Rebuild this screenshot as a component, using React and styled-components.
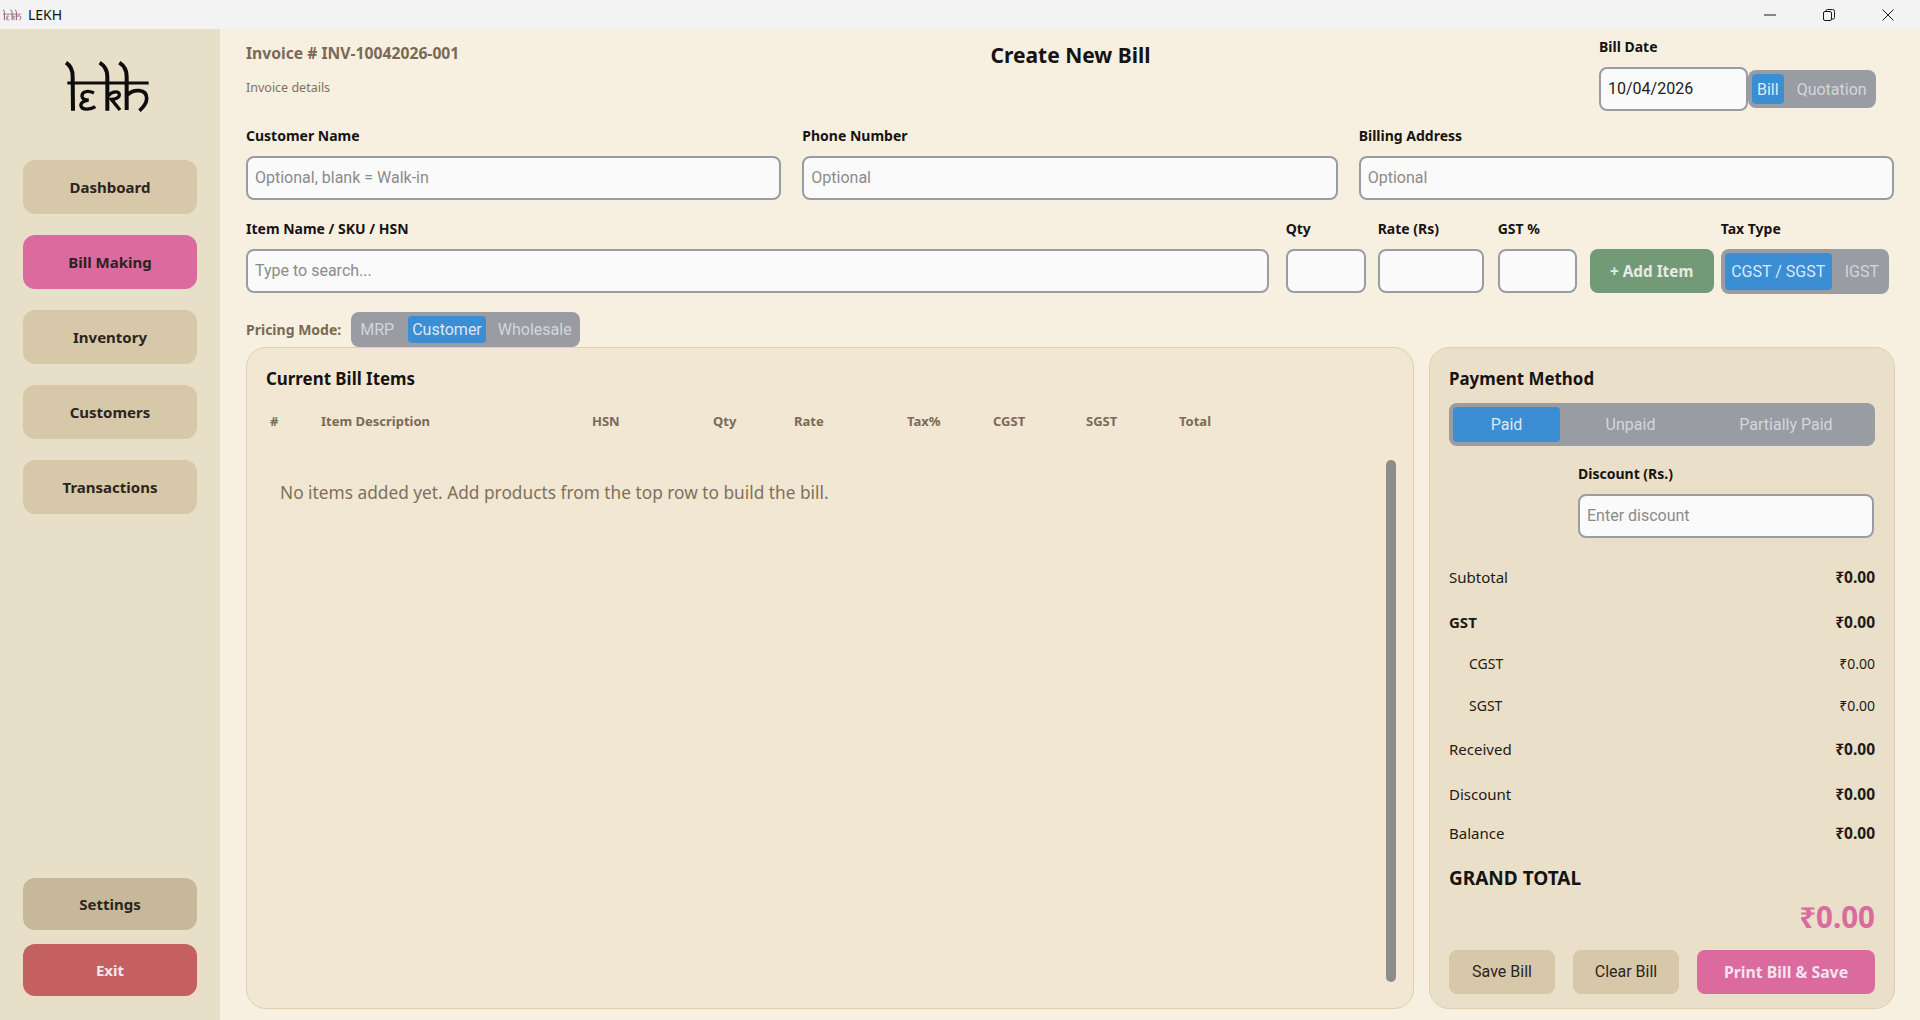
import React from 'react';
import styled, { createGlobalStyle } from 'styled-components';

const UI_FONT = `"Noto Sans", "Open Sans", "Liberation Sans", sans-serif`;
const INPUT_FONT = `Roboto, "Noto Sans", sans-serif`;

const GlobalStyle = createGlobalStyle`
  html, body, #root {
    margin: 0;
    padding: 0;
    height: 100%;
  }
  body {
    font-family: ${UI_FONT};
    background: #f7f0e1;
    overflow: hidden;
  }
  * {
    box-sizing: border-box;
  }
`;

// bill table columns, first cell sits on the # column
const TABLE_COLUMNS = '51px 271px 121px 81px 113px 86px 93px 93px 1fr';

const NAV_ITEMS = ['Dashboard', 'Bill Making', 'Inventory', 'Customers', 'Transactions'];
const TABLE_HEADERS = ['#', 'Item Description', 'HSN', 'Qty', 'Rate', 'Tax%', 'CGST', 'SGST', 'Total'];

const Logo = ({ width, height, color }) => (
  <svg width={width} height={height} viewBox="0 0 270 162" fill="none" stroke={color} aria-label="lekh">
    <path d="M16 69H260" strokeWidth="9" />
    <path d="M12 8C28 18 32 32 32 50L33 152" strokeWidth="12" />
    <path d="M96 99C76 90 60 95 60 108C60 118 70 120 80 120C63 122 55 130 57 138C60 150 85 150 100 140" strokeWidth="10" />
    <path d="M113 8C129 18 136 32 136 50L136 152" strokeWidth="12" />
    <path d="M138 108C150 92 172 92 172 104C172 114 158 118 148 118L174 150" strokeWidth="10" />
    <path d="M172 8C188 18 194 32 194 50L194 150" strokeWidth="12" />
    <path d="M196 105C214 86 254 86 254 115C254 135 240 145 232 152" strokeWidth="11" />
  </svg>
);

const App = () => (
  <Window>
    <GlobalStyle />
    <TitleBar>
      <TitleLeft>
        <Logo width={20} height={12} color="#8a4a66" />
        <span>LEKH</span>
      </TitleLeft>
      <WindowControls>
        <svg width="12" height="12" viewBox="0 0 12 12" stroke="#1a1a1a" fill="none">
          <path d="M0 6H12" />
        </svg>
        <svg width="12" height="12" viewBox="0 0 12 12" stroke="#1a1a1a" fill="none">
          <rect x="0.5" y="2.5" width="8" height="9" rx="1.5" />
          <path d="M3 2.5V2a1.5 1.5 0 0 1 1.5-1.5h5A2 2 0 0 1 11.5 2.5v6A1.5 1.5 0 0 1 10 10h-1.5" />
        </svg>
        <svg width="12" height="12" viewBox="0 0 12 12" stroke="#1a1a1a" fill="none">
          <path d="M0.5 0.5L11.5 11.5M11.5 0.5L0.5 11.5" />
        </svg>
      </WindowControls>
    </TitleBar>

    <Body>
      <Sidebar>
        <LogoWrap>
          <Logo width={90} height={54} color="#0d0d0d" />
        </LogoWrap>
        <NavList>
          {NAV_ITEMS.map((item) => (
            <NavButton key={item} $active={item === 'Bill Making'}>{item}</NavButton>
          ))}
        </NavList>
        <SidebarBottom>
          <FooterButton $bg="#c8b89a" $color="#2b241f">Settings</FooterButton>
          <FooterButton $bg="#c46060" $color="#f2e6f2">Exit</FooterButton>
        </SidebarBottom>
      </Sidebar>

      <Main>
        <Header>
          <InvoiceInfo>
            <InvoiceNumber>Invoice # INV-10042026-001</InvoiceNumber>
            <InvoiceSub>Invoice details</InvoiceSub>
          </InvoiceInfo>
          <PageTitle>Create New Bill</PageTitle>
          <DateBlock>
            <Label>Bill Date</Label>
            <DateRow>
              <Input $width="149px" defaultValue="10/04/2026" />
              <Toggle $height="38px">
                <ToggleOption $active $height="30px" $padding="0 5px">Bill</ToggleOption>
                <ToggleOption $height="30px" $padding="0 5px 0 13px">Quotation</ToggleOption>
              </Toggle>
            </DateRow>
          </DateBlock>
        </Header>

        <CustomerGrid>
          <Field>
            <Label>Customer Name</Label>
            <Input placeholder="Optional, blank = Walk-in" />
          </Field>
          <Field>
            <Label>Phone Number</Label>
            <Input placeholder="Optional" />
          </Field>
          <Field>
            <Label>Billing Address</Label>
            <Input placeholder="Optional" />
          </Field>
        </CustomerGrid>

        <ItemRow>
          <Field $grow>
            <Label>Item Name / SKU / HSN</Label>
            <Input placeholder="Type to search..." />
          </Field>
          <Field $width="80px" $left="17px">
            <Label>Qty</Label>
            <Input />
          </Field>
          <Field $width="106px" $left="12px">
            <Label>Rate (Rs)</Label>
            <Input />
          </Field>
          <Field $width="79px" $left="14px">
            <Label>GST %</Label>
            <Input />
          </Field>
          <AddButton>+ Add Item</AddButton>
          <Field $left="7px">
            <Label>Tax Type</Label>
            <Toggle $height="45px">
              <ToggleOption $active $height="37px" $padding="0 6.5px">CGST / SGST</ToggleOption>
              <ToggleOption $height="37px" $padding="0 6px 0 13px">IGST</ToggleOption>
            </Toggle>
          </Field>
        </ItemRow>

        <PricingRow>
          <PricingLabel>Pricing Mode:</PricingLabel>
          <Toggle $height="35px">
            <ToggleOption $height="27px" $padding="0 14px 0 5px">MRP</ToggleOption>
            <ToggleOption $active $height="27px" $padding="0 4px">Customer</ToggleOption>
            <ToggleOption $height="27px" $padding="0 4px 0 12px">Wholesale</ToggleOption>
          </Toggle>
        </PricingRow>

        <Panels>
          <ItemsPanel>
            <PanelTitle>Current Bill Items</PanelTitle>
            <TableHead>
              {TABLE_HEADERS.map((h) => (
                <span key={h}>{h}</span>
              ))}
            </TableHead>
            <TableBody>
              <EmptyMessage>No items added yet. Add products from the top row to build the bill.</EmptyMessage>
              <ScrollThumb />
            </TableBody>
          </ItemsPanel>

          <PaymentPanel>
            <PanelTitle>Payment Method</PanelTitle>
            <PaymentToggle>
              <PaymentOption $active $width="107px">Paid</PaymentOption>
              <PaymentOption $width="141px">Unpaid</PaymentOption>
              <PaymentOption $width="170px">Partially Paid</PaymentOption>
            </PaymentToggle>
            <DiscountField>
              <Label>Discount (Rs.)</Label>
              <Input placeholder="Enter discount" />
            </DiscountField>

            <SummaryRow $top="29px"><span>Subtotal</span><b>₹0.00</b></SummaryRow>
            <SummaryRow $top="25px" $bold><span>GST</span><b>₹0.00</b></SummaryRow>
            <SummaryRow $top="22px" $sub><span>CGST</span><span>₹0.00</span></SummaryRow>
            <SummaryRow $top="22px" $sub><span>SGST</span><span>₹0.00</span></SummaryRow>
            <SummaryRow $top="23px"><span>Received</span><b>₹0.00</b></SummaryRow>
            <SummaryRow $top="25px"><span>Discount</span><b>₹0.00</b></SummaryRow>
            <SummaryRow $top="19px"><span>Balance</span><b>₹0.00</b></SummaryRow>
            <GrandLabel>GRAND TOTAL</GrandLabel>
            <GrandValue>₹0.00</GrandValue>

            <Actions>
              <ActionButton $width="106px">Save Bill</ActionButton>
              <ActionButton $width="106px">Clear Bill</ActionButton>
              <PrintButton>Print Bill &amp; Save</PrintButton>
            </Actions>
          </PaymentPanel>
        </Panels>
      </Main>
    </Body>
  </Window>
);

const Window = styled.div`
  height: 1020px;
  display: flex;
  flex-direction: column;
`;

const TitleBar = styled.div`
  height: 29px;
  flex-shrink: 0;
  background: #f3f3f3;
  display: flex;
  align-items: center;
  justify-content: space-between;
`;

const TitleLeft = styled.div`
  display: flex;
  align-items: center;
  gap: 6px;
  padding-left: 2px;
  font-size: 14px;
  color: #111;
`;

const WindowControls = styled.div`
  display: flex;
  align-items: center;
  gap: 47px;
  padding-right: 26px;
`;

const Body = styled.div`
  flex: 1;
  display: flex;
  min-height: 0;
`;

const Sidebar = styled.aside`
  width: 220px;
  flex-shrink: 0;
  background: #e8dfc9;
  padding: 0 23px 24px;
  display: flex;
  flex-direction: column;
`;

const LogoWrap = styled.div`
  display: flex;
  justify-content: center;
  padding: 31px 6px 0 0;
  height: 131px;
`;

const NavList = styled.nav`
  display: flex;
  flex-direction: column;
  gap: 21px;
`;

const NavButton = styled.button`
  height: 54px;
  border: none;
  border-radius: 12px;
  background: ${(p) => (p.$active ? '#db6a9e' : '#d8c8aa')};
  color: #2b241f;
  font-family: ${UI_FONT};
  font-size: 15px;
  font-weight: 700;
`;

const SidebarBottom = styled.div`
  margin-top: auto;
  display: flex;
  flex-direction: column;
  gap: 14px;
`;

const FooterButton = styled.button`
  height: 52px;
  border: none;
  border-radius: 12px;
  background: ${(p) => p.$bg};
  color: ${(p) => p.$color};
  font-family: ${UI_FONT};
  font-size: 15px;
  font-weight: 700;
`;

const Main = styled.main`
  flex: 1;
  min-width: 0;
  background: #f7f0e1;
  padding: 9px 25px 11px 26px;
  display: flex;
  flex-direction: column;
`;

const Header = styled.header`
  display: grid;
  grid-template-columns: 1fr auto 1fr;
`;

const InvoiceInfo = styled.div`
  padding-top: 5px;
`;

const InvoiceNumber = styled.div`
  font-size: 15.7px;
  line-height: 20px;
  font-weight: 700;
  color: #7a6a55;
`;

const InvoiceSub = styled.div`
  margin-top: 15px;
  font-size: 12.5px;
  line-height: 20px;
  color: #7f705c;
`;

const PageTitle = styled.h1`
  margin: 3px 0 0;
  font-size: 21px;
  line-height: 28px;
  font-weight: 700;
  color: #161412;
`;

const DateBlock = styled.div`
  justify-self: end;
  padding-right: 19px;
  width: 296px;
  display: flex;
  flex-direction: column;
  gap: 11px;
`;

const DateRow = styled.div`
  display: flex;
  align-items: center;
`;

const Label = styled.label`
  display: block;
  font-size: 14px;
  line-height: 18px;
  font-weight: 700;
  color: #161412;
`;

const Input = styled.input`
  display: block;
  width: ${(p) => p.$width || '100%'};
  flex-shrink: 0;
  height: 44px;
  padding: 0 7px 2px;
  border: 2px solid #999ca3;
  border-radius: 8px;
  background: #fafafa;
  color: #222;
  font-family: ${INPUT_FONT};
  font-size: 16px;
  outline: none;

  &::placeholder {
    color: #8b8b8b;
    opacity: 1;
  }
`;

const Toggle = styled.div`
  height: ${(p) => p.$height};
  display: inline-flex;
  align-items: center;
  padding: 0 4px;
  border-radius: 8px;
  background: #999ca3;
`;

const ToggleOption = styled.span`
  height: ${(p) => p.$height};
  display: flex;
  align-items: center;
  padding: ${(p) => p.$padding};
  border-radius: 4px;
  background: ${(p) => (p.$active ? '#3b8dd4' : 'transparent')};
  color: ${(p) => (p.$active ? '#dbe9f7' : '#d3d6dc')};
  font-family: ${INPUT_FONT};
  font-size: 16px;
  white-space: nowrap;
`;

const CustomerGrid = styled.div`
  margin-top: 16px;
  padding-right: 1px;
  display: grid;
  grid-template-columns: repeat(3, 1fr);
  gap: 21px;
`;

const Field = styled.div`
  display: flex;
  flex-direction: column;
  gap: 11px;
  ${(p) => p.$grow && 'flex: 1; min-width: 0;'}
  ${(p) => p.$width && `width: ${p.$width}; flex-shrink: 0;`}
  ${(p) => p.$left && `margin-left: ${p.$left};`}
`;

const ItemRow = styled.div`
  margin-top: 20px;
  padding-right: 6px;
  display: flex;
  align-items: flex-start;
`;

const AddButton = styled.button`
  width: 124px;
  height: 44px;
  margin: 29px 0 0 13px;
  border: none;
  border-radius: 8px;
  background: #739a76;
  color: #e4ebe4;
  font-family: ${UI_FONT};
  font-size: 15.3px;
  font-weight: 700;
`;

const PricingRow = styled.div`
  margin-top: 18px;
  display: flex;
  align-items: center;
  gap: 10px;
  position: relative;
`;

const PricingLabel = styled.span`
  font-size: 14px;
  font-weight: 700;
  color: #7a6a55;
`;

const Panels = styled.div`
  flex: 1;
  min-height: 0;
  display: grid;
  grid-template-columns: 1fr 466px;
  gap: 15px;
`;

const ItemsPanel = styled.section`
  display: flex;
  flex-direction: column;
  padding: 19px 17px 26px 19px;
  border: 1px solid #dfcfaf;
  border-radius: 20px;
  background: #f2e7d3;
`;

const PanelTitle = styled.h2`
  margin: 0;
  font-size: 16.9px;
  line-height: 24px;
  font-weight: 700;
  color: #161412;
`;

const TableHead = styled.div`
  margin-top: 20px;
  padding-left: 4px;
  display: grid;
  grid-template-columns: ${TABLE_COLUMNS};
  font-size: 13px;
  line-height: 20px;
  font-weight: 700;
  color: #7a6a55;
`;

const TableBody = styled.div`
  flex: 1;
  min-height: 0;
  display: flex;
  justify-content: space-between;
`;

const EmptyMessage = styled.p`
  margin: 48px 0 0 14px;
  font-size: 17.3px;
  line-height: 28px;
  color: #7f705c;
`;

const ScrollThumb = styled.div`
  width: 10px;
  margin-top: 29px;
  border-radius: 5px;
  background: #8c8c8c;
`;

const PaymentPanel = styled.section`
  display: flex;
  flex-direction: column;
  padding: 19px 19px 14px;
  border: 1px solid #dfcfaf;
  border-radius: 20px;
  background: #eadfc8;
`;

const PaymentToggle = styled.div`
  height: 43px;
  margin-top: 12px;
  padding: 0 4px;
  display: flex;
  align-items: center;
  border-radius: 8px;
  background: #999ca3;
`;

const PaymentOption = styled.span`
  width: ${(p) => p.$width};
  height: 35px;
  display: flex;
  align-items: center;
  justify-content: center;
  border-radius: 4px;
  background: ${(p) => (p.$active ? '#3b8dd4' : 'transparent')};
  color: ${(p) => (p.$active ? '#dbe9f7' : '#d3d6dc')};
  font-family: ${INPUT_FONT};
  font-size: 16px;
`;

const DiscountField = styled(Field)`
  margin-top: 19px;
  margin-left: 129px;
  margin-right: 1px;
`;

const SummaryRow = styled.div`
  margin-top: ${(p) => p.$top};
  padding-left: ${(p) => (p.$sub ? '20px' : '0')};
  display: flex;
  justify-content: space-between;
  font-size: ${(p) => (p.$sub ? '14px' : '15px')};
  line-height: 20px;
  color: #1e1a17;
  font-weight: ${(p) => (p.$bold ? 700 : 400)};

  b {
    font-size: 15.5px;
    font-weight: 700;
  }
`;

const GrandLabel = styled.div`
  margin-top: 21px;
  font-size: 19px;
  line-height: 28px;
  font-weight: 700;
  color: #161412;
`;

const GrandValue = styled.div`
  margin-top: 6px;
  text-align: right;
  font-size: 29.5px;
  line-height: 38px;
  font-weight: 700;
  color: #db6a9e;
`;

const Actions = styled.div`
  margin-top: auto;
  display: flex;
  justify-content: space-between;
`;

const ActionButton = styled.button`
  width: ${(p) => p.$width};
  height: 44px;
  padding: 0 0 2px;
  border: none;
  border-radius: 8px;
  background: #d8c8aa;
  color: #2b241f;
  font-family: ${INPUT_FONT};
  font-size: 16px;
`;

const PrintButton = styled.button`
  width: 178px;
  height: 44px;
  border: none;
  border-radius: 8px;
  background: #db6a9e;
  color: #f2e4f0;
  font-family: ${UI_FONT};
  font-size: 15.8px;
  font-weight: 700;
`;

export default App;
